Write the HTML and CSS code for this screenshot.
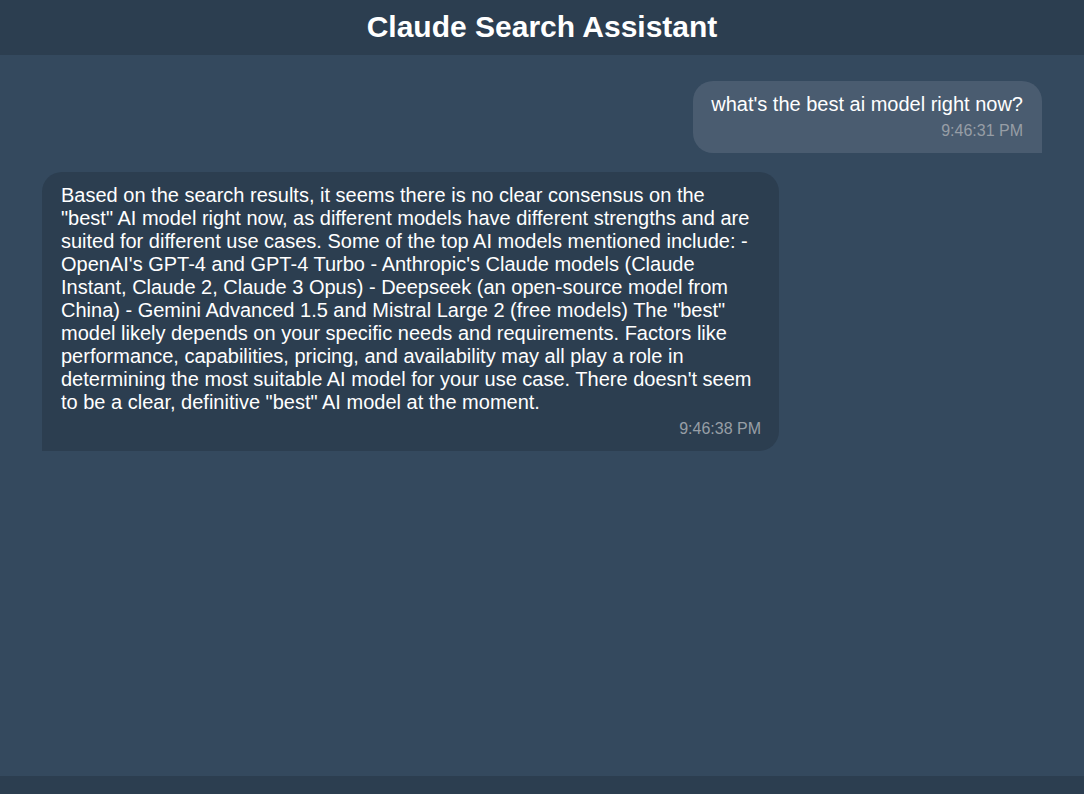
FILE: index.html
```html
<!DOCTYPE html>
<html>
<head>
<meta charset="utf-8">
<link rel="stylesheet" href="styles.css">
</head>
<body>
<div class="app">
  <header class="header"><h1 class="title">Claude Search Assistant</h1></header>
  <main class="chat">
    <div class="msg msg-user">
      <div class="msg-text">what's the best ai model right now?</div>
      <div class="msg-time">9:46:31 PM</div>
    </div>
    <div class="msg msg-bot">
      <div class="msg-text">Based on the search results, it seems there is no clear consensus on the "best" AI model right now, as different models have different strengths and are suited for different use cases. Some of the top AI models mentioned include: - OpenAI's GPT-4 and GPT-4 Turbo - Anthropic's Claude models (Claude Instant, Claude 2, Claude 3 Opus) - Deepseek (an open-source model from China) - Gemini Advanced 1.5 and Mistral Large 2 (free models) The "best" model likely depends on your specific needs and requirements. Factors like performance, capabilities, pricing, and availability may all play a role in determining the most suitable AI model for your use case. There doesn't seem to be a clear, definitive "best" AI model at the moment.</div>
      <div class="msg-time">9:46:38 PM</div>
    </div>
  </main>
  <footer class="footer"></footer>
</div>
</body>
</html>
```
FILE: styles.css
```css
* { box-sizing: border-box; }
html, body { margin: 0; padding: 0; height: 100%; }
body {
  font-family: "Liberation Sans", Arial, sans-serif;
  background: #34495e;
  color: #ffffff;
}
.app {
  display: flex;
  flex-direction: column;
  height: 100vh;
}
.header {
  height: 55px;
  background: #2c3e50;
  display: flex;
  align-items: center;
  justify-content: center;
}
.title {
  margin: 0;
  font-size: 30px;
  font-weight: bold;
  line-height: 34px;
  padding-bottom: 2px;
}
.chat {
  flex: 1;
  padding: 26px 42px;
  display: flex;
  flex-direction: column;
  gap: 19px;
}
.msg {
  padding: 12px 18px 13px 18px;
  border-radius: 20px;
  max-width: 737px;
}
.msg-user {
  align-self: flex-end;
  background: #4a5c70;
  border-bottom-right-radius: 0;
  padding-left: 18px;
  padding-right: 19px;
}
.msg-bot {
  align-self: flex-start;
  background: #2c3e50;
  border-bottom-left-radius: 0;
  padding-left: 19px;
}
.msg-text {
  font-size: 20px;
  line-height: 23px;
}
.msg-time {
  margin-top: 6px;
  text-align: right;
  font-size: 16px;
  line-height: 18px;
  color: #979ea6;
}
.footer {
  height: 18px;
  background: #2c3e50;
}
```
